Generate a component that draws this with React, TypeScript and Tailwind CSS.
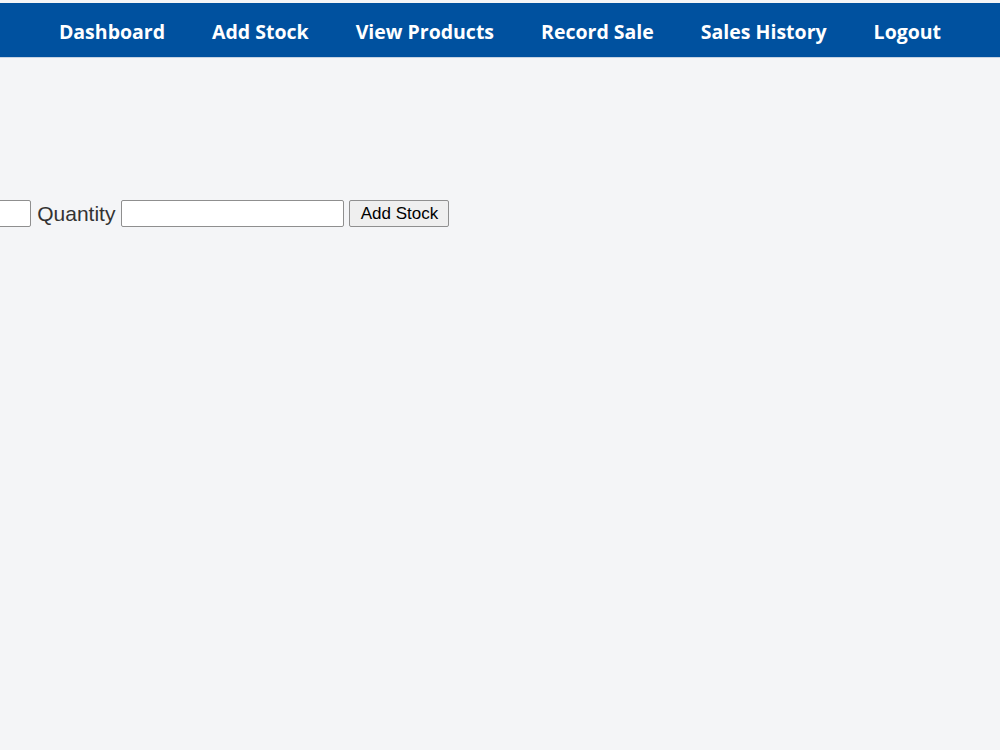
export default function App() {
  const links = ["Dashboard", "Add Stock", "View Products", "Record Sale", "Sales History", "Logout"];

  return (
    <div className="min-h-[750px] bg-[#f4f5f7] pt-[3px]" style={{ fontFamily: "'Liberation Sans', Arial, sans-serif" }}>
      <nav className="flex h-[55px] items-center justify-center gap-[47px] border-b border-[#c7d3e3] bg-[#00519f] pt-[3px]">
        {links.map((label) => (
          <a
            key={label}
            href="#"
            className="text-[19.5px] font-bold text-white"
            style={{ fontFamily: "'Open Sans', 'Noto Sans', sans-serif" }}
          >
            {label}
          </a>
        ))}
      </nav>

      <form className="mt-[140px] ml-[-259px] flex items-center text-[21px] text-[#333]">
        <label className="mr-[6px]">Product Name</label>
        <input type="text" className="h-[27px] w-[150px] rounded-[2px] border border-[#8f8f8f] bg-white" />
        <label className="mx-[6px]">Quantity</label>
        <input type="number" className="h-[27px] w-[223px] rounded-[2px] border border-[#8f8f8f] bg-white" />
        <button
          type="button"
          className="ml-[5px] h-[27px] w-[100px] rounded-[2px] border border-[#8f8f8f] bg-[#efefef] text-[17px] text-black"
        >
          Add Stock
        </button>
      </form>
    </div>
  );
}
